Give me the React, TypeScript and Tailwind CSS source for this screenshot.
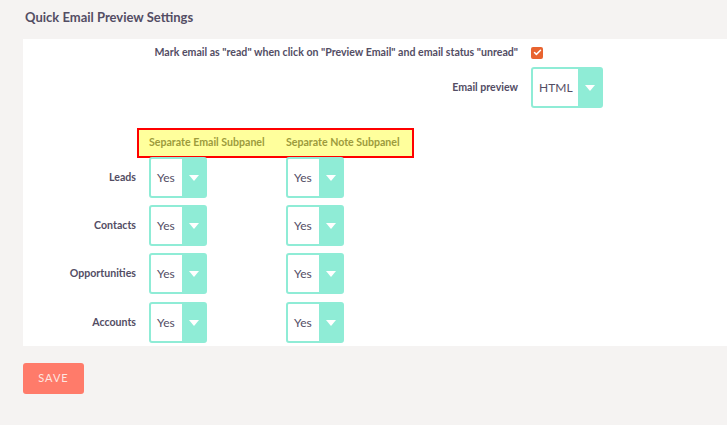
import { Check } from 'lucide-react';

const modules = ['Leads', 'Contacts', 'Opportunities', 'Accounts'];

function Dropdown({ value, width }: { value: string; width: string }) {
  return (
    <div className={`flex h-[41px] ${width} rounded-[3px] border-2 border-[#8fecd6] bg-white`}>
      <div className="flex flex-1 items-center pl-[6px] text-[12px] text-[#534d64]">{value}</div>
      <div className="flex w-[23px] items-center justify-center bg-[#8fecd6]">
        <svg width="10" height="6" viewBox="0 0 10 6">
          <path d="M0 0h10L5 6z" fill="#fff" />
        </svg>
      </div>
    </div>
  );
}

export default function App() {
  return (
    <div
      className="min-h-[425px] bg-[#f5f3f2] pl-[23px] pt-[9px]"
      style={{ fontFamily: 'Lato, "Noto Sans", sans-serif' }}
    >
      <h2 className="pl-[2px] text-[13px] font-bold leading-[16px] text-[#534d64]">
        Quick Email Preview Settings
      </h2>

      {/* Settings panel */}
      <div className="mt-[14px] bg-white pb-[3px]">
        <div className="flex h-[26px] items-center pt-[1px]">
          <label className="w-[495px] text-right text-[10.6px] font-bold text-[#534d64]">
            Mark email as "read" when click on "Preview Email" and email status "unread"
          </label>
          <div className="ml-[13px] flex h-[12px] w-[12px] items-center justify-center rounded-[2px] bg-[#e8632f]">
            <Check className="h-[9px] w-[9px] text-white" strokeWidth={4} />
          </div>
        </div>

        <div className="mt-[2px] flex items-center">
          <label className="w-[495px] text-right text-[10.6px] font-bold text-[#534d64]">
            Email preview
          </label>
          <div className="ml-[13px]">
            <Dropdown value="HTML" width="w-[72px]" />
          </div>
        </div>

        {/* Subpanel header */}
        <div className="ml-[114px] mt-[20px] flex h-[30px] w-[277px] items-center border-2 border-[#ff0000] bg-[#ffff9c] pl-[10px] text-[10.6px] font-bold text-[#9d9b3c]">
          <span className="w-[137px]">Separate Email Subpanel</span>
          <span>Separate Note Subpanel</span>
        </div>

        <div className="-mt-px flex flex-col gap-[7px]">
          {modules.map((m, i) => (
            <div key={m} className={`flex items-center ${i === 3 ? 'mt-px' : ''}`}>
              <label className="w-[113px] text-right text-[10.6px] font-bold text-[#534d64]">{m}</label>
              <div className="ml-[13px] w-[137px]">
                <Dropdown value="Yes" width="w-[58px]" />
              </div>
              <Dropdown value="Yes" width="w-[58px]" />
            </div>
          ))}
        </div>
      </div>

      <button className="mt-[17px] h-[31px] w-[61px] rounded-[3px] bg-[#ff7b6a] text-[11px] tracking-[1px] text-[#fde6e0]">
        SAVE
      </button>
    </div>
  );
}
